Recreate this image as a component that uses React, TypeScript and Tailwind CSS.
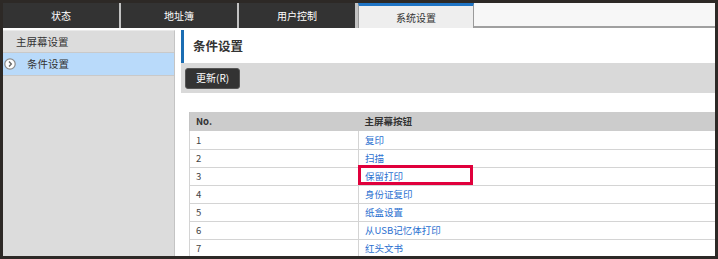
import React from 'react'

const tabs = ['状态', '地址簿', '用户控制']

const rows = [
  { no: '1', name: '复印' },
  { no: '2', name: '扫描' },
  { no: '3', name: '保留打印' },
  { no: '4', name: '身份证复印' },
  { no: '5', name: '纸盒设置' },
  { no: '6', name: '从USB记忆体打印' },
  { no: '7', name: '红头文书' },
]

function CircleArrow() {
  return (
    <svg width="12" height="12" viewBox="0 0 12 12" className="shrink-0">
      <circle cx="6" cy="6" r="5.2" fill="#fff" stroke="#8a8a8a" strokeWidth="1.2" />
      <path d="M5 3.6 L7.3 6 L5 8.4" fill="none" stroke="#6a6a6a" strokeWidth="1.4" />
    </svg>
  )
}

export default function App() {
  return (
    <div
      className="w-[718px] h-[259px] overflow-hidden border-[3px] border-[#2d2926] bg-white flex flex-col"
      style={{ fontFamily: '"Noto Sans CJK SC", "Liberation Sans", sans-serif' }}
    >
      {/* Tab bar */}
      <div className="flex h-[25px] shrink-0">
        <div className="flex gap-[2px] bg-[#c2c2c2] pr-[3px]">
          {tabs.map((t) => (
            <div
              key={t}
              className="w-[116px] bg-[#333333] text-white text-[10px] flex items-center justify-center"
            >
              {t}
            </div>
          ))}
        </div>
        <div className="w-[116px] bg-[#eeeeee] border-t-[3px] border-t-[#1f74c4] border-x border-x-[#9a9a9a] text-[#333] text-[10px] flex items-center justify-center">
          系统设置
        </div>
        <div className="flex-1 bg-[#f7f7f7] border-b-2 border-[#a0a0a0]" />
      </div>

      {/* Body */}
      <div className="flex flex-1 pt-[2px] min-h-0">
        <div className="w-[172px] shrink-0 bg-[#dcdcdc] border-r border-[#c4c4c4] border-t border-t-[#eaeaea]">
          <div className="h-[22px] flex items-center pl-[13px] text-[10.5px] text-[#333] border-b border-[#c9c9c9]">
            主屏幕设置
          </div>
          <div className="h-[23px] flex items-center pl-[1px] gap-[11px] text-[10.5px] text-[#333] bg-[#b9dafa] border-b border-[#c9c9c9]">
            <CircleArrow />
            条件设置
          </div>
        </div>

        <div className="flex-1 pl-[6px] min-w-0">
          <div className="h-[33px] border-l-[3px] border-[#1b6db3] pl-[9px] flex items-center text-[12.5px] font-bold text-[#333]">
            条件设置
          </div>
          <div className="h-[30px] bg-[#d9d9d9] pl-[4px] flex items-center">
            <button className="h-[21px] px-[10px] rounded-[3px] bg-[#333333] border border-[#555] text-white text-[10px] leading-none">
              更新(R)
            </button>
          </div>

          <div className="relative mt-[19px] ml-[8px] w-[560px]">
            <table className="w-full border-collapse text-[9.5px]">
              <thead>
                <tr className="h-[19px] bg-[#cccccc] text-[#333] font-bold">
                  <th className="w-[169px] text-left pl-[6px] border-l border-[#c4c4c4]">No.</th>
                  <th className="text-left pl-[6px]">主屏幕按钮</th>
                </tr>
              </thead>
              <tbody>
                {rows.map((r) => (
                  <tr key={r.no} className="h-[18px] border-b border-[#d4d4d4]">
                    <td className="pl-[6px] text-[#444] border-l border-r border-[#d4d4d4]">{r.no}</td>
                    <td className="pl-[6px] text-[#2a6fd0]">{r.name}</td>
                  </tr>
                ))}
              </tbody>
            </table>
            {/* highlight box */}
            <div className="absolute left-[169px] top-[53px] w-[115px] h-[20px] border-[3px] border-[#e0003c]" />
          </div>
        </div>
      </div>
    </div>
  )
}
